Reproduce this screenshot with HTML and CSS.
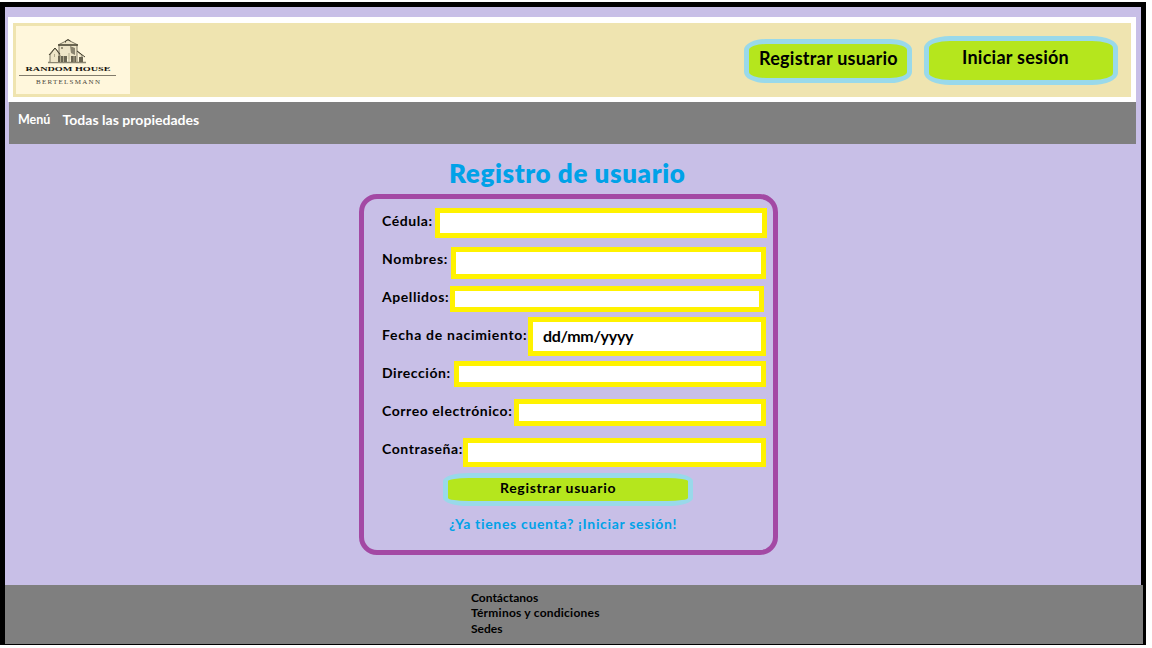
FILE: index.html
```html
<!DOCTYPE html>
<html lang="es">
<head>
<meta charset="utf-8">
<title>Registro de usuario</title>
<link rel="stylesheet" href="styles.css">
</head>
<body>
<div class="frame">
  <header class="header">
    <svg class="logo" viewBox="0 0 114 68" width="114" height="68">
      <rect width="114" height="68" fill="#fff7dc"/>
      <path d="M32 36.500h38" stroke="#8b8671" stroke-width="1.400"/>
      <path d="M34 36V29l5-7 5 7v7M43 30V19h18v17M42 19l10-5 10 5zM61 25l5 4v7" fill="#eee5c7" stroke="#5f5b49" stroke-width=".8"/>
      <path d="M49.500 16.500v-1.500l2.500-1.500 2.500 1.500M42 19h20M46 21v2M56 21v2M33 29l6-7 5 6M61 25l8 6" fill="none" stroke="#45412f" stroke-width="1"/>
      <path d="M42 30h9v6h-9zM55 30h5v6h-5zM63 31h4v5h-4z" fill="#6a6552"/>
      <path d="M44.500 30v6M47.500 30v6M53 27v9M58 30v6M38.500 28v3" stroke="#b1aa8d" stroke-width="1"/>
      <path d="M54 20l5 2v7l-4-2z" fill="#8b8570"/>
      <text class="logo-name" x="9.500" y="45.300" textLength="85" lengthAdjust="spacingAndGlyphs">RANDOM HOUSE</text>
      <path d="M3 49.500h97" stroke="#817b6b"/>
      <text class="logo-sub" x="20" y="57.500" textLength="64" lengthAdjust="spacing">BERTELSMANN</text>
    </svg>
    <div class="actions">
      <button class="btn btn-register"><span>Registrar usuario</span></button>
      <button class="btn btn-login"><span>Iniciar sesión</span></button>
    </div>
  </header>
  <nav class="nav">
    <a class="nav-menu">Menú</a>
    <a class="nav-all">Todas las propiedades</a>
  </nav>
  <main class="main">
    <h1 class="title"><span>Registro de usuario</span></h1>
    <form class="form">
      <div class="row cedula"><label><span>Cédula:</span></label><div class="input"></div></div>
      <div class="row nombres"><label><span>Nombres:</span></label><div class="input"></div></div>
      <div class="row apellidos"><label><span>Apellidos:</span></label><div class="input"></div></div>
      <div class="row fecha"><label><span>Fecha de nacimiento:</span></label><div class="input"><span>dd/mm/yyyy</span></div></div>
      <div class="row direccion"><label><span>Dirección:</span></label><div class="input"></div></div>
      <div class="row correo"><label><span>Correo electrónico:</span></label><div class="input"></div></div>
      <div class="row contrasena"><label><span>Contraseña:</span></label><div class="input"></div></div>
      <button type="button" class="btn btn-submit"><span>Registrar usuario</span></button>
      <a class="login-link">¿Ya tienes cuenta? ¡Iniciar sesión!</a>
    </form>
  </main>
  <footer class="footer">
    <a class="f1">Contáctanos</a>
    <a class="f2">Términos y condiciones</a>
    <a class="f3">Sedes</a>
  </footer>
</div>
</body>
</html>
```
FILE: styles.css
```css
* { box-sizing: border-box; }
body { margin: 0; padding-top: 2px; height: 648px; overflow: hidden; background: #fff; font-family: Lato, sans-serif; font-weight: 700; font-variant-ligatures: none; color: #000; }
.frame { width: 1146px; height: 643px; background: #c8bfe7; border: 5px solid #000; border-bottom-width: 1px; display: flex; flex-direction: column; }
.header { margin: 10px 5px 0 3px; height: 85px; flex: none; background: #efe4b0; border: 5px solid #fff; border-top-width: 6px; padding: 3px 13px 0 3px; display: flex; justify-content: space-between; align-items: flex-start; }
.logo { display: block; }
.logo-name { font: 700 7px "Liberation Serif", serif; fill: #15130e; }
.logo-sub { font: 400 7px "Liberation Serif", serif; fill: #4a463a; }
.actions { display: flex; gap: 12px; align-items: flex-start; }
.btn { font: inherit; font-variant-ligatures: none; color: #000; background: #b5e61d; border: 5px solid #99d9ea; padding: 0; display: flex; align-items: center; white-space: nowrap; }
.btn-register { width: 168px; height: 44px; margin-top: 13px; border-radius: 22px / 11px; font-size: 18px; letter-spacing: .25px; padding: 0 0 6px 10px; }
.btn-login { width: 194px; height: 49px; margin-top: 10px; border-radius: 26px / 12px; font-size: 18px; letter-spacing: .25px; padding: 0 0 7px 33px; }
.nav { margin: 0 5px 0 4px; height: 42px; flex: none; background: #7f7f7f; color: #fff; display: flex; align-items: flex-start; padding-left: 9px; }
.nav a { line-height: 18px; white-space: nowrap; }
.nav-menu { font-size: 12.500px; padding-top: 9px; width: 44.500px; }
.nav-all { font-size: 14px; padding-top: 9px; letter-spacing: .03px; }
.main { flex: 1; padding: 0 0 0 354px; display: flex; flex-direction: column; align-items: flex-start; }
.title { margin: 0; height: 50px; padding: 14px 0 0 90px; font-size: 26px; font-weight: 800; letter-spacing: .6px; line-height: 31px; color: #00a2e8; white-space: nowrap; }
.form { width: 419px; height: 361px; border: 5px solid #a349a4; border-radius: 18px; padding: 3px 0 0 18px; display: flex; flex-direction: column; align-items: flex-start; }
.row { height: 38px; flex: none; display: flex; align-items: flex-start; font-size: 14px; line-height: 38px; letter-spacing: .57px; }
.row label { flex: none; white-space: nowrap; }
.input { border: 5px solid #fff200; background: #fff; flex: none; }
.cedula label { width: 53px; } .cedula .input { width: 332px; height: 30px; margin-top: 6px; }
.nombres label { width: 69px; letter-spacing: .7px; } .nombres .input { width: 315px; height: 32px; margin-top: 7px; }
.apellidos label { width: 68px; } .apellidos .input { width: 314px; height: 26px; margin-top: 8px; }
.fecha label { width: 146px; letter-spacing: .7px; } .fecha .input { width: 238px; height: 39px; margin-top: 1px; padding-left: 10px; line-height: 27px; font-size: 16px; letter-spacing: -.3px; }
.direccion label { width: 72px; } .direccion .input { width: 312px; height: 26px; margin-top: 7px; }
.correo label { width: 132px; } .correo .input { width: 252px; height: 27px; margin-top: 7px; }
.contrasena label { width: 81px; } .contrasena .input { width: 303px; height: 29px; margin-top: 8px; }
.btn-submit { width: 250px; height: 33px; flex: none; margin: 5px 0 0 61px; border-radius: 26px / 8px; font-size: 14px; letter-spacing: .67px; padding: 0 0 4px 52px; }
.login-link { color: #00a2e8; font-size: 14px; letter-spacing: .68px; line-height: 18px; margin: 9px 0 0 67px; white-space: nowrap; }
.footer { height: 59px; flex: none; margin-right: -2px; background: #7f7f7f; padding: 5px 0 0 466px; display: flex; flex-direction: column; align-items: flex-start; font-size: 12px; line-height: 15.300px; }
.f2 { letter-spacing: .23px; }
```
